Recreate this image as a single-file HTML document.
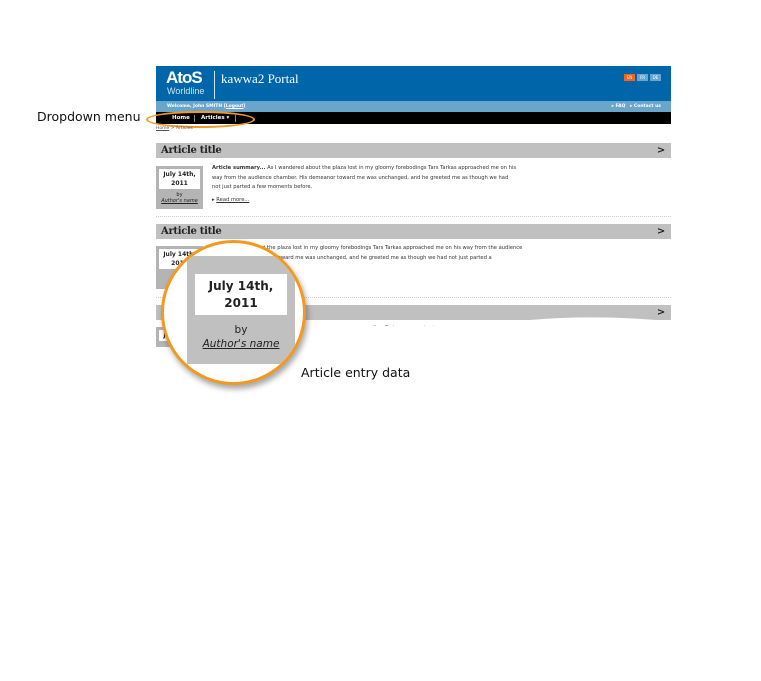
<!DOCTYPE html>
<html><head><meta charset="utf-8"><style>
*{margin:0;padding:0;box-sizing:border-box}
body{width:761px;height:681px;background:#fff;position:relative;overflow:hidden;font-family:"DejaVu Sans","Liberation Sans",sans-serif;color:#222}
.a{position:absolute}
.hdr{left:156px;top:66px;width:515px;height:35px;background:#0066aa}
.sub{left:156px;top:101px;width:515px;height:11px;background:#6aa6cc;color:#fff;font-size:4.5px;font-weight:bold;line-height:11px}
.nav{left:156px;top:112px;width:515px;height:12px;background:#000;color:#fff;font-size:5.5px;font-weight:bold;line-height:12px}
.bar{left:156px;width:515px;height:15px;background:#c0c0c0;font-family:"DejaVu Serif","Liberation Serif",serif;font-weight:bold;font-size:10px;line-height:15px;padding-left:5px;letter-spacing:-0.3px}
.bar b{position:absolute;right:6px;top:0;font-family:"DejaVu Sans";font-weight:bold;font-size:10px}
.meta{left:156px;width:47px;background:#b4b4b4;text-align:center;font-size:5px}
.meta .d{background:#fff;margin:3px 3px 0;padding:1px 0;font-weight:bold;font-size:6px;line-height:9px}
.txt{font-size:5.2px;line-height:9.5px;color:#333}
.dot{left:156px;width:515px;border-top:1px dotted #ccc;height:0}
</style></head><body>
<div class="a" style="left:37px;top:109px;font-size:12.5px;color:#111">Dropdown menu</div>
<div class="a hdr">
 <div class="a" style="left:10px;top:2px;color:#fff;font-weight:bold;font-size:17px;letter-spacing:-1px;font-family:'Liberation Sans'">AtoS</div>
 <div class="a" style="left:11px;top:20px;color:#cfe3f2;font-size:9px;font-family:'Liberation Sans'">Worldline</div>
 <div class="a" style="left:58px;top:5px;width:1px;height:28px;background:#cfe3f2"></div>
 <div class="a" style="left:65px;top:5px;color:#fff;font-size:13px;font-family:'Liberation Serif'">kawwa2 Portal</div>
 <div class="a" style="left:468px;top:8px;width:11px;height:7px;background:#f26522;color:#fff;font-size:4px;text-align:center;line-height:7px">EN</div>
 <div class="a" style="left:481px;top:8px;width:11px;height:7px;background:#6aa6cc;color:#fff;font-size:4px;text-align:center;line-height:7px">FR</div>
 <div class="a" style="left:494px;top:8px;width:11px;height:7px;background:#6aa6cc;color:#fff;font-size:4px;text-align:center;line-height:7px">DE</div>
</div>
<div class="a sub"><span style="margin-left:11px">Welcome, John SMITH [<u>Logout</u>]</span><span class="a" style="right:10px;top:0">▸ FAQ &nbsp; ▸ Contact us</span></div>
<div class="a nav"><span class="a" style="left:16px">Home</span><span class="a" style="left:38px;top:3px;width:1px;height:7px;background:#888"></span><span class="a" style="left:45px">Articles ▾</span><span class="a" style="left:79px;top:3px;width:1px;height:7px;background:#888"></span></div>
<div class="a" style="left:146px;top:111px;width:109px;height:17px;border:2.5px solid #f39a1e;border-radius:50%"></div>
<div class="a" style="left:156px;top:126px;font-size:4.5px;color:#555"><u>Home</u> &gt; Articles</div>

<div class="a bar" style="top:143px">Article title<b>&gt;</b></div>
<div class="a meta" style="top:166px;height:43px"><div class="d">July 14th,<br>2011</div><div style="margin-top:3px">by</div><div><u><i>Author's name</i></u></div></div>
<div class="a txt" style="left:212px;top:164px;width:305px"><b>Article summary...</b> As I wandered about the plaza lost in my gloomy forebodings Tars Tarkas approached me on his way from the audience chamber. His demeanor toward me was unchanged, and he greeted me as though we had not just parted a few moments before.<br><span style="display:block;margin-top:3px">▸ <u>Read more...</u></span></div>
<div class="a dot" style="top:216px"></div>

<div class="a bar" style="top:224px">Article title<b>&gt;</b></div>
<div class="a meta" style="top:246px;height:43px"><div class="d">July 14th,<br>2011</div></div>
<div class="a txt" style="left:212px;top:244px;width:320px">As I wandered about the plaza lost in my gloomy forebodings Tars Tarkas approached me on his way from the audience chamber. His demeanor toward me was unchanged, and he greeted me as though we had not just parted a</div>
<div class="a dot" style="top:297px"></div>

<div class="a bar" style="top:305px">Article title<b>&gt;</b></div>
<div class="a meta" style="top:327px;height:20px"><div class="d">July 14th,</div></div>
<div class="a txt" style="left:212px;top:324px;width:300px">As I wandered about the plaza lost in my gloomy forebodings Tars Tarkas approached me on his</div>
<svg class="a" style="left:300px;top:312px" width="380" height="50"><path d="M0 10 Q120 18 230 8 Q300 2 380 10 L380 50 L0 50Z" fill="#fff"/></svg>

<div class="a" style="left:161px;top:240px;width:145px;height:145px;border-radius:50%;border:3px solid #f39a1e;background:#fff;overflow:hidden;box-shadow:2px 4px 6px rgba(0,0,0,.35)">
 <div class="a" style="left:23px;top:13px;width:108px;height:108px;background:#c0c0c0;text-align:center">
  <div style="background:#fff;margin:18px 8px 0;height:41px;font-weight:bold;font-size:12px;line-height:17px;padding-top:4px">July 14th,<br>2011</div>
  <div style="margin-top:8px;font-size:10.5px;line-height:14px">by</div>
  <div style="font-size:10.5px;line-height:14px"><u><i>Author's name</i></u></div>
 </div>
</div>
<div class="a" style="left:301px;top:365px;font-size:12.5px;color:#111">Article entry data</div>
</body></html>
